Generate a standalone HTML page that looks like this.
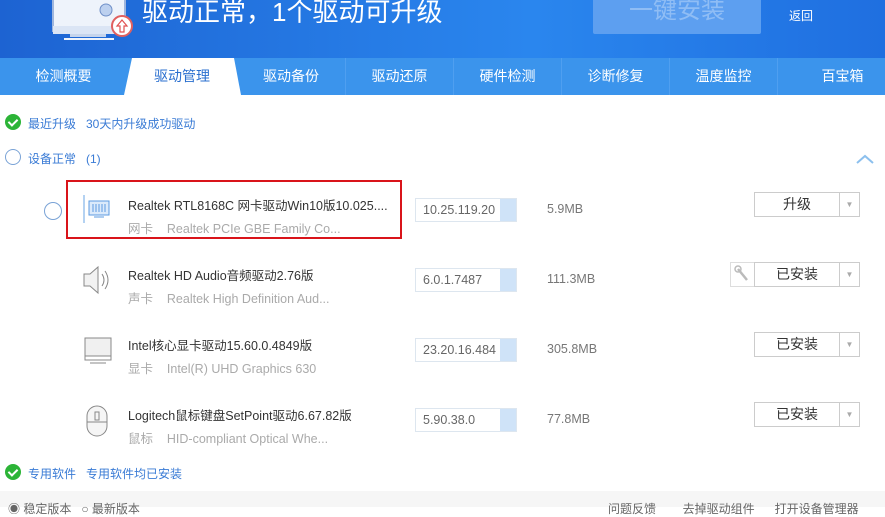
<!DOCTYPE html>
<html><head><meta charset="utf-8"><style>
*{margin:0;padding:0;box-sizing:border-box}
body{width:885px;height:507px;overflow:hidden;background:#fff;font-family:"Liberation Sans","Noto Sans CJK SC",sans-serif;position:relative;color:#333}
.hdr{position:absolute;left:0;top:0;width:885px;height:58px;background:linear-gradient(90deg,#1d63d2,#2a86ee 60%,#1f6fe0)}
.tabs{position:absolute;left:0;top:58px;width:885px;height:37px;background:#3b94ec}
.tab{position:absolute;top:0;height:37px;line-height:37px;color:#fff;font-size:14px;text-align:center;border-left:1px solid #4f9ff0}
.abs{position:absolute;white-space:nowrap}
.t{font-size:12.5px;color:#333}
.s{font-size:12.5px;color:#aaa}
.ver{position:absolute;width:102px;height:24px;border:1px solid #dde6ef;font-size:12.5px;color:#666;line-height:22px;padding-left:7px}
.ver::after{content:"";position:absolute;right:0;top:0;width:16px;height:22px;background:#cfe3f8}
.btn{position:absolute;left:754px;width:106px;height:25px;border:1px solid #ccc;font-size:14px;color:#333;line-height:23px}
.btn span{position:absolute;left:0;width:84px;text-align:center}
.btn i{position:absolute;left:84px;top:0;width:20px;height:23px;border-left:1px solid #ccc;color:#aaa;font-size:8px;font-style:normal;text-align:center}
.size{position:absolute;left:547px;font-size:12.5px;color:#777}
.chk{position:absolute;width:16px;height:16px;border-radius:50%;background:#2cb437}
.chk::after{content:"";position:absolute;left:5px;top:3px;width:4px;height:7px;border:solid #fff;border-width:0 2px 2px 0;transform:rotate(45deg)}
.rad{position:absolute;width:16px;height:16px;border-radius:50%;border:1px solid #7aa3d6}
.blue{color:#3a7bd5;font-size:12px}
</style></head><body>
<div class="hdr">
 <svg class="abs" style="left:50px;top:0" width="90" height="52">
  <rect x="3" y="-5" width="72" height="36" fill="#eef3fb" stroke="#9fb6dd" stroke-width="2"/>
  <rect x="3" y="26" width="72" height="8" fill="#dbe5f5"/>
  <rect x="20" y="34" width="36" height="3" fill="#c5d4ec"/>
  <rect x="14" y="38" width="50" height="2" fill="#eef3fb"/>
  <circle cx="56" cy="10" r="6" fill="#bcd0ef" stroke="#6f8fc8"/>
  <circle cx="72" cy="26" r="10" fill="#fff" stroke="#e06060" stroke-width="2"/>
  <path d="M72 20 L67 26 H70 V32 H74 V26 H77 Z" fill="none" stroke="#e05050" stroke-width="1.2"/>
 </svg>
 <div class="abs" style="left:142px;top:-8px;font-size:26px;color:#fff">驱动正常，1个驱动可升级</div>
 <div class="abs" style="left:593px;top:-4px;width:168px;height:38px;background:#5d9ff0;border-radius:2px;color:#8fbdf5;font-size:24px;text-align:center;line-height:30px">一键安装</div>
 <div class="abs" style="left:789px;top:7px;font-size:12px;color:#fff">返回</div>
</div>
<div class="tabs">
 <div class="tab" style="left:0;width:127px;border:none">检测概要</div>
 <svg class="abs" style="left:124px;top:0" width="120" height="37"><path d="M0 37 L8 0 H110 L117 37 Z" fill="#fff"/></svg>
 <div class="tab" style="left:127px;width:110px;border:none;color:#2a6fcf">驱动管理</div>
 <div class="tab" style="left:237px;width:108px;border:none">驱动备份</div>
 <div class="tab" style="left:345px;width:108px">驱动还原</div>
 <div class="tab" style="left:453px;width:108px">硬件检测</div>
 <div class="tab" style="left:561px;width:108px">诊断修复</div>
 <div class="tab" style="left:669px;width:108px">温度监控</div>
 <div class="tab" style="left:777px;width:108px;padding-left:22px">百宝箱</div>
</div>
<div class="chk" style="left:5px;top:114px"></div>
<div class="abs blue" style="left:28px;top:115px">最近升级&nbsp;&nbsp;&nbsp;30天内升级成功驱动</div>
<div class="rad" style="left:5px;top:149px"></div>
<div class="abs blue" style="left:28px;top:150px">设备正常&nbsp;&nbsp;&nbsp;(1)</div>
<svg class="abs" style="left:855px;top:153px" width="20" height="12"><path d="M2 10 L10 3 L18 10" fill="none" stroke="#8cc0ee" stroke-width="2"/></svg>

<div class="abs" style="left:66px;top:180px;width:336px;height:59px;border:2px solid #d9141a"></div>
<div class="rad" style="left:44px;top:202px;width:18px;height:18px"></div>
<svg class="abs" style="left:82px;top:193px" width="30" height="32"><path d="M2 2 V30" stroke="#6aa6e6"/><rect x="7" y="8" width="20" height="14" fill="#dbeafb" stroke="#5d9be0"/><path d="M11 11V19M14 11V19M17 11V19M20 11V19M23 11V19" stroke="#5d9be0"/><path d="M12 24 H22" stroke="#5d9be0"/></svg>
<div class="abs t" style="left:128px;top:195px">Realtek RTL8168C 网卡驱动Win10版10.025....</div>
<div class="abs s" style="left:128px;top:218px">网卡&nbsp;&nbsp;&nbsp;&nbsp;Realtek PCIe GBE Family Co...</div>
<div class="ver" style="left:415px;top:198px">10.25.119.20</div>
<div class="size" style="top:202px">5.9MB</div>
<div class="btn" style="top:192px"><span>升级</span><i>▼</i></div>

<svg class="abs" style="left:80px;top:264px" width="34" height="32"><path d="M4 10 H10 L18 3 V29 L10 22 H4 Z" fill="#f2f2f2" stroke="#888"/><path d="M22 10 Q26 16 22 22 M25 7 Q31 16 25 25" fill="none" stroke="#888"/></svg>
<div class="abs t" style="left:128px;top:265px">Realtek HD Audio音频驱动2.76版</div>
<div class="abs s" style="left:128px;top:288px">声卡&nbsp;&nbsp;&nbsp;&nbsp;Realtek High Definition Aud...</div>
<div class="ver" style="left:415px;top:268px">6.0.1.7487</div>
<div class="size" style="top:272px">111.3MB</div>
<div class="abs" style="left:730px;top:262px;width:25px;height:25px;border:1px solid #ddd"><svg width="23" height="23"><path d="M7 6 L16 17" stroke="#bbb" stroke-width="2.5"/><circle cx="7" cy="6" r="3" fill="none" stroke="#bbb" stroke-width="1.5"/></svg></div>
<div class="btn" style="top:262px"><span>已安装</span><i>▼</i></div>

<svg class="abs" style="left:82px;top:336px" width="32" height="30"><rect x="3" y="2" width="26" height="18" fill="#f0f0f0" stroke="#888"/><path d="M3 20 H29 V24 H3Z M8 27 H24" fill="none" stroke="#888"/></svg>
<div class="abs t" style="left:128px;top:335px">Intel核心显卡驱动15.60.0.4849版</div>
<div class="abs s" style="left:128px;top:358px">显卡&nbsp;&nbsp;&nbsp;&nbsp;Intel(R) UHD Graphics 630</div>
<div class="ver" style="left:415px;top:338px">23.20.16.484</div>
<div class="size" style="top:342px">305.8MB</div>
<div class="btn" style="top:332px"><span>已安装</span><i>▼</i></div>

<svg class="abs" style="left:84px;top:404px" width="28" height="34"><rect x="3" y="2" width="20" height="30" rx="10" fill="#f5f5f5" stroke="#888"/><path d="M3 18 H23" stroke="#888"/><rect x="11" y="8" width="4" height="8" fill="none" stroke="#888"/></svg>
<div class="abs t" style="left:128px;top:405px">Logitech鼠标键盘SetPoint驱动6.67.82版</div>
<div class="abs s" style="left:128px;top:428px">鼠标&nbsp;&nbsp;&nbsp;&nbsp;HID-compliant Optical Whe...</div>
<div class="ver" style="left:415px;top:408px">5.90.38.0</div>
<div class="size" style="top:412px">77.8MB</div>
<div class="btn" style="top:402px"><span>已安装</span><i>▼</i></div>

<div class="chk" style="left:5px;top:464px"></div>
<div class="abs blue" style="left:28px;top:465px">专用软件&nbsp;&nbsp;&nbsp;专用软件均已安装</div>
<div class="abs" style="left:0;top:491px;width:885px;height:16px;background:#f6f6f6"></div>
<div class="abs" style="left:8px;top:500px;font-size:12px;color:#666">◉ 稳定版本&nbsp;&nbsp;&nbsp;○ 最新版本</div>
<div class="abs" style="left:608px;top:500px;font-size:12px;color:#666">问题反馈&nbsp;&nbsp;&nbsp;&nbsp;&nbsp;&nbsp;&nbsp;&nbsp;去掉驱动组件&nbsp;&nbsp;&nbsp;&nbsp;&nbsp;&nbsp;打开设备管理器</div>
</body></html>
